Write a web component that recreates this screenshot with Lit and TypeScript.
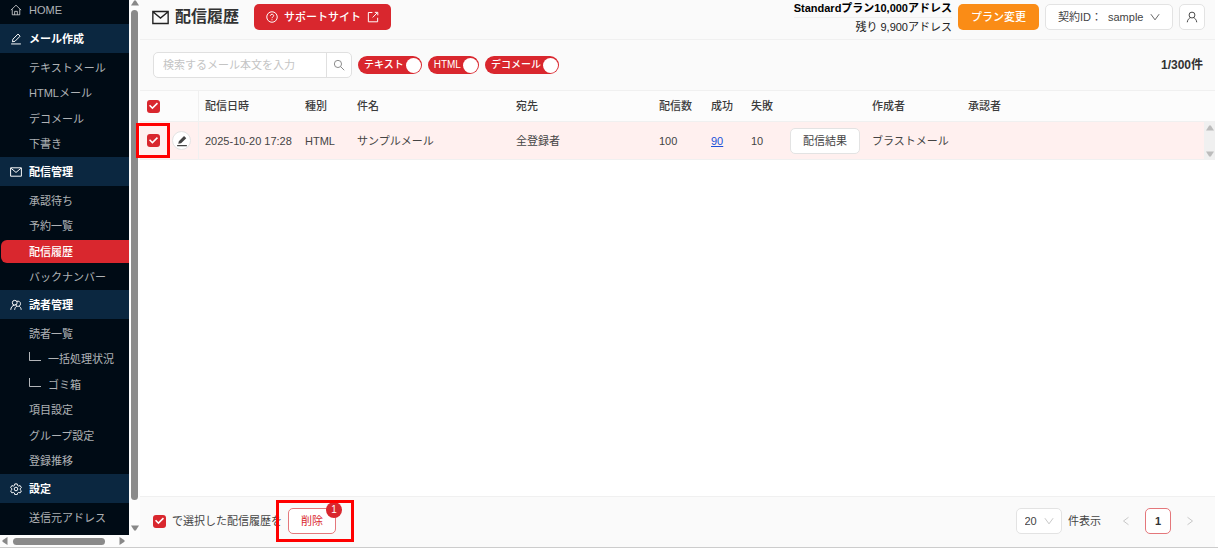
import { LitElement, html, css, svg, nothing } from "lit";
import { customElement } from "lit/decorators.js";
import { classMap } from "lit/directives/class-map.js";

const icon = (name: string, body: unknown, box = "0 0 16 16") =>
  html`<svg class="icon ${name}" viewBox=${box} aria-hidden="true">${body}</svg>`;

const home = () => icon("i12", svg`<path d="M1.2 8.2 8 1.6l6.8 6.6M3 7v7.4h10V7M6.2 14.2V9.8h3.600v4.400"/>`);
const pen = () => icon("i12", svg`<path d="M1.500 14.600h13M3.200 11.800l.7-3.600L10.700 1.400l2.800 2.800-6.800 6.800z"/>`);
const penSolid = () => icon("i12 solid", svg`<path d="M1.500 13.400h13v1.500h-13zM3 11.800l.8-3.600 6.900-6.900 3 2.900-6.900 6.900z"/>`);
const mail = (size: string) => icon(size, svg`<path d="M.8 2.400h14.400v11.200H.8zM1.400 3 8 8.600 14.600 3"/>`);
const people = () => icon("i12", svg`<circle cx="6.300" cy="5" r="3.200"/><path d="M1 14.400c.2-3.400 2.200-5.800 5-6.200M9 3.200c2.700-1 5 .6 5 3 0 2.600-2 3.800-3.600 3.600-1.800-.2-2.800-1.600-2.900-3M6.200 14.400c.3-2.600 1.400-4.200 3-4.800M12.400 9.800c1.400.8 2.400 2.400 2.500 4.600"/>`);
const gear = () => icon("i12", svg`<circle cx="8" cy="8" r="2.400"/><path d="M6.400 1.200h3.200l.5 2.100 1.400.8 2-.7 1.700 2.800-1.600 1.400v1.500l1.600 1.400-1.700 2.700-2-.6-1.400.8-.5 2.100H6.400l-.5-2.100-1.400-.8-2 .6-1.700-2.700 1.600-1.400V7.600L.8 6.200l1.700-2.800 2 .7 1.400-.8z"/>`);
const help = () => icon("i12", svg`<circle cx="8" cy="8" r="7"/><path d="M5.800 6.400C5.800 3.600 10.200 3.700 10.200 6.300 10.200 7.900 8 7.900 8 9.600M8 11v1.400"/>`);
const external = () => icon("i12", svg`<path d="M7.200 2H1.800v12.400h12.400V9M7.600 8.600l6-6.200M10.400 1.800h4v4"/>`);
const search = () => icon("i12", svg`<circle cx="6.600" cy="6.600" r="4.800"/><path d="m10.200 10.200 4.800 4.800"/>`);
const user = () => icon("i12", svg`<circle cx="8" cy="5.400" r="3.900"/><path d="M1.700 15c.3-3.200 2-5.300 4.500-6.200M14.300 15c-.3-3.200-2-5.300-4.500-6.200"/>`);
const chevron = () => icon("i10", svg`<path d="m1.400 3.500 6.600 9 6.600-9"/>`);
const prev = () => icon("i10", svg`<path d="M12 2 4 8l8 6"/>`);
const next = () => icon("i10", svg`<path d="m4 2 8 6-8 6"/>`);
const branch = () => html`<svg class="branch" viewBox="0 0 12 12" aria-hidden="true"><path d="M.5 0v8.500H12"/></svg>`;
const arrow = (dir: string) => html`<svg class="arrow ${dir}" viewBox="0 0 8 6" aria-hidden="true"><path d="M0 5.500 3.200.5h1.600L8 5.500z"/></svg>`;

interface Entry { label: string; nested?: boolean; active?: boolean }
interface Group { label: string; icon: () => unknown; items: Entry[] }

const groups: Group[] = [
  { label: "メール作成", icon: pen, items: [{ label: "テキストメール" }, { label: "HTMLメール" }, { label: "デコメール" }, { label: "下書き" }] },
  { label: "配信管理", icon: () => mail("i12"), items: [{ label: "承認待ち" }, { label: "予約一覧" }, { label: "配信履歴", active: true }, { label: "バックナンバー" }] },
  {
    label: "読者管理", icon: people,
    items: [{ label: "読者一覧" }, { label: "一括処理状況", nested: true }, { label: "ゴミ箱", nested: true }, { label: "項目設定" }, { label: "グループ設定" }, { label: "登録推移" }],
  },
  { label: "設定", icon: gear, items: [{ label: "送信元アドレス" }] },
];

const base = css`
  *, *::before, *::after { box-sizing: border-box; }
  :host { font: 11px/18px "Liberation Sans", "Noto Sans CJK JP", sans-serif; color: #444; }
  ul { list-style: none; margin: 0; padding: 0; }
  a { color: inherit; text-decoration: none; }
  button, input, select { font: inherit; color: inherit; margin: 0; padding: 0; }
  .icon { display: block; flex: none; fill: none; stroke: currentColor; stroke-width: 1.3; }
  .solid { fill: currentColor; stroke: none; }
  .i10 { width: 10px; height: 10px; }
  .i12 { width: 12px; height: 12px; }
  .i17 { width: 17px; height: 17px; }
  .arrow { display: block; flex: none; width: 8px; height: 6px; fill: #888; }
  .down { transform: rotate(180deg); }
  .left { transform: rotate(-90deg); }
  .right { transform: rotate(90deg); }
  .check {
    appearance: none; display: grid; place-items: center; flex: none;
    width: 13px; height: 13px; border-radius: 3px; background: #d9272e;
  }
  .check::after {
    content: ""; width: 9px; height: 9px; background: #fff;
    clip-path: polygon(0 48%, 12% 36%, 38% 62%, 88% 12%, 100% 24%, 38% 86%);
  }
`;

@customElement("side-menu")
export class SideMenu extends LitElement {
  static styles = [base, css`
    :host { display: grid; grid-template: minmax(0, 1fr) 12px / minmax(0, 1fr) 11px; width: 140px; background: #fcfcfc; }
    .menu { overflow: hidden; background: #000b15; color: rgba(255, 255, 255, 0.7); }
    .home { display: flex; align-items: center; gap: 7px; height: 24px; padding: 0 0 4px 10px; }
    .group { display: flex; align-items: center; gap: 7px; height: 29px; padding-left: 10px; background: #0b2740; color: #fff; font-weight: 600; }
    .items { padding-top: 2px; }
    .item { display: flex; align-items: center; height: 25px; }
    .item:nth-child(even) { height: 26px; }
    .link { display: flex; flex: 1; align-items: center; gap: 7px; height: 23px; margin-left: 1px; padding-left: 28px; white-space: nowrap; }
    .active { background: #d9272e; color: #fff; font-weight: 500; border-radius: 6px 0 0 6px; }
    .branch { width: 12px; height: 12px; margin-top: -2px; fill: none; stroke: currentColor; }
    .vbar { display: flex; flex-direction: column; align-items: center; gap: 4px; padding-bottom: 4px; }
    .vthumb { flex: 1; width: 7px; margin-bottom: 21px; border-radius: 4px; background: #8a8a8a; }
    .hbar { display: flex; align-items: center; gap: 4px; padding: 0 3px 0 1px; }
    .hthumb { flex: 1; height: 7px; margin-right: 9px; border-radius: 4px; background: #8a8a8a; }
  `];

  render() {
    return html`
      <nav class="menu">
        <a class="home" href="#">${home()}<span>HOME</span></a>
        ${groups.map((g) => html`
          <div class="group">${g.icon()}<span>${g.label}</span></div>
          <ul class="items">
            ${g.items.map((i) => html`
              <li class="item">
                <a href="#" class=${classMap({ link: true, active: !!i.active })}>${i.nested ? branch() : nothing}<span>${i.label}</span></a>
              </li>`)}
          </ul>`)}
      </nav>
      <div class="vbar">${arrow("up")}<div class="vthumb"></div>${arrow("down")}</div>
      <div class="hbar">${arrow("left")}<div class="hthumb"></div>${arrow("right")}</div>`;
  }
}

@customElement("app-root")
export class AppRoot extends LitElement {
  static styles = [base, css`
    :host { display: grid; grid-template-columns: auto minmax(0, 1fr); height: 100vh; padding-right: 3px; box-sizing: border-box; border-bottom: 1px solid #ccc; background: #fff; }
    .main { display: flex; flex-direction: column; min-width: 0; }
    .top { display: flex; align-items: center; gap: 6px; height: 40px; padding: 0 10px 5px 12px; background: #fafafa; border-bottom: 1px solid #f0f0f0; }
    .title { margin: 0 9px 0 0; font-size: 16px; font-weight: 600; line-height: 24px; color: #333; white-space: nowrap; }
    .top > .i17 { color: #222; }
    .btn {
      display: flex; align-items: center; justify-content: center; height: 26px; border: 1px solid #e3e3e3;
      border-radius: 5px; background: #fff; white-space: nowrap; position: relative;
    }
    .btn select { appearance: none; border: 0; background: none; outline: 0; }
    .support { gap: 6px; padding: 0 12px; border: 0; background: #d9272e; color: #fff; font-weight: 500; }
    .plan { margin-left: auto; text-align: right; color: #222; white-space: nowrap; }
    .plan-name { display: block; color: #000; font-weight: 700; border-bottom: 1px solid #f0f0f0; }
    .plan-rest { display: block; }
    .change { padding: 0 13px; border: 0; background: #fa8c16; color: #fff; font-weight: 500; }
    .pick { gap: 6px; padding: 0 12px; }
    .user { width: 26px; }
    .tools { display: flex; align-items: center; gap: 6px; height: 50px; padding: 0 12px 0 13px; background: #fafafa; }
    .search { display: flex; width: 199px; height: 26px; border: 1px solid #e0e0e0; border-radius: 5px; background: #fff; overflow: hidden; }
    .search input { flex: 1; min-width: 0; padding: 0 9px; border: 0; background: none; outline: 0; }
    .search input::placeholder { color: #c4c4c4; opacity: 1; }
    .search button { display: grid; place-items: center; width: 25px; border: 0; border-left: 1px solid #e0e0e0; background: none; color: #888; }
    .switch { display: flex; align-items: center; gap: 2px; height: 18px; padding: 0 1px 0 6px; border-radius: 9px; background: #d9272e; color: #fff; font-size: 10px; font-weight: 500; white-space: nowrap; }
    .switch input { appearance: none; width: 15px; height: 15px; border-radius: 50%; background: #fff; }
    .count { margin-left: auto; font-size: 12px; font-weight: 700; color: #333; }
    .list { width: 100%; table-layout: fixed; border-collapse: separate; border-spacing: 0; }
    .list th, .list td { padding: 0 6px; text-align: left; font-weight: 400; white-space: nowrap; }
    .list th { height: 32px; border-top: 1px solid #f0f0f0; border-bottom: 1px solid #f0f0f0; background: #fcfcfc; color: #3c3c3c; font-weight: 500; }
    .list td { height: 38px; border-bottom: 1px solid #f0f0f0; background: #fff0ef; }
    .list .edge { border-right: 1px solid #f0f0f0; }
    .list .gutter { padding: 0; background: #f0f0f0; }
    .c-check { width: 32px; } .c-edit { width: 27px; } .c-date { width: 100px; } .c-kind { width: 52px; }
    .c-subject { width: 159px; } .c-to { width: 143px; } .c-sent { width: 52px; } .c-ok { width: 40px; }
    .c-fail { width: 39px; } .c-result { width: 82px; } .c-author { width: 96px; } .c-gutter { width: 11px; }
    .list .tight { padding: 0 0 0 7px; }
    .list .pen { padding: 0; }
    .edit { display: grid; place-items: center; width: 19px; height: 19px; border: 1px solid #e3e3e3; border-radius: 50%; background: #fff; color: #444; }
    .ok { color: #2050d8; text-decoration: underline; }
    .result { width: 70px; }
    .bar { display: flex; flex-direction: column; align-items: center; justify-content: space-between; height: 32px; }
    .bar .arrow { fill: #bcbcbc; }
    .space { flex: 1; }
    .foot { display: flex; align-items: center; gap: 6px; height: 51px; padding: 0 12px 2px 13px; background: #fafafa; border-top: 1px solid #f0f0f0; }
    .selected { display: flex; align-items: center; gap: 6px; white-space: nowrap; }
    .delete { padding: 0 12px; border-color: #e4777b; color: #d9272e; }
    .badge { position: absolute; top: -7px; right: -7px; width: 16px; height: 16px; border-radius: 8px; background: #d9272e; color: #fff; font-size: 10px; line-height: 16px; text-align: center; }
    .focus { position: absolute; border: 3px solid #f00; pointer-events: none; }
    .focus-delete { inset: -9px -19px -9px -13px; }
    .row-check { position: relative; width: 13px; }
    .focus-row { inset: -11px -10px -11px -11px; }
    .size { display: flex; align-items: center; gap: 6px; margin-left: auto; white-space: nowrap; }
    .size .btn { gap: 6px; width: 46px; }
    .size .icon, .pager .icon { color: #bbb; }
    .pager { display: flex; align-items: center; margin-left: 6px; gap: 6px; }
    .pager .btn { width: 26px; }
    .pager .plain { border: 0; background: none; }
    .pager .current { border-color: #e4777b; color: #333; font-weight: 700; }
  `];

  private switchFor(label: string) {
    return html`<label class="switch"><span>${label}</span><input type="checkbox" role="switch" checked /></label>`;
  }

  render() {
    return html`
      <side-menu></side-menu>
      <main class="main">
        <header class="top">
          ${mail("i17")}
          <h1 class="title">配信履歴</h1>
          <a class="btn support" href="#">${help()}<span>サポートサイト</span>${external()}</a>
          <div class="plan"><span class="plan-name">Standardプラン10,000アドレス</span><span class="plan-rest">残り 9,900アドレス</span></div>
          <button class="btn change">プラン変更</button>
          <div class="btn pick"><label for="contract">契約ID：</label><select id="contract"><option>sample</option></select>${chevron()}</div>
          <button class="btn user" aria-label="ユーザー">${user()}</button>
        </header>
        <div class="tools">
          <form class="search" role="search">
            <input type="text" placeholder="検索するメール本文を入力" aria-label="メール本文" />
            <button type="button" aria-label="検索">${search()}</button>
          </form>
          ${this.switchFor("テキスト")}${this.switchFor("HTML")}${this.switchFor("デコメール")}
          <span class="count">1/300件</span>
        </div>
        <table class="list">
          <colgroup>
            <col class="c-check" /><col class="c-edit" /><col class="c-date" /><col class="c-kind" /><col class="c-subject" />
            <col class="c-to" /><col class="c-sent" /><col class="c-ok" /><col class="c-fail" /><col class="c-result" />
            <col class="c-author" /><col /><col class="c-gutter" />
          </colgroup>
          <thead>
            <tr>
              <th class="tight"><input class="check" type="checkbox" checked aria-label="すべて選択" /></th>
              <th class="edge"></th><th>配信日時</th><th>種別</th><th>件名</th><th>宛先</th><th>配信数</th><th>成功</th><th>失敗</th>
              <th></th><th>作成者</th><th>承認者</th><th class="tight"></th>
            </tr>
          </thead>
          <tbody>
            <tr>
              <td class="tight"><div class="row-check"><input class="check" type="checkbox" checked aria-label="選択" /><span class="focus focus-row"></span></div></td>
              <td class="edge pen"><button class="edit" aria-label="編集">${penSolid()}</button></td>
              <td>2025-10-20 17:28</td><td>HTML</td><td>サンプルメール</td><td>全登録者</td><td>100</td>
              <td><a class="ok" href="#">90</a></td><td>10</td>
              <td><button class="btn result">配信結果</button></td>
              <td>ブラストメール</td><td></td>
              <td class="gutter"><div class="bar">${arrow("up")}${arrow("down")}</div></td>
            </tr>
          </tbody>
        </table>
        <div class="space"></div>
        <footer class="foot">
          <label class="selected"><input class="check" type="checkbox" checked /><span>で選択した配信履歴を</span></label>
          <button class="btn delete">削除<span class="badge">1</span><span class="focus focus-delete"></span></button>
          <div class="size">
            <div class="btn"><select id="size"><option>20</option></select>${chevron()}</div>
            <label for="size">件表示</label>
          </div>
          <nav class="pager" aria-label="ページ">
            <button class="btn plain" aria-label="前へ">${prev()}</button>
            <button class="btn current">1</button>
            <button class="btn plain" aria-label="次へ">${next()}</button>
          </nav>
        </footer>
      </main>`;
  }
}
